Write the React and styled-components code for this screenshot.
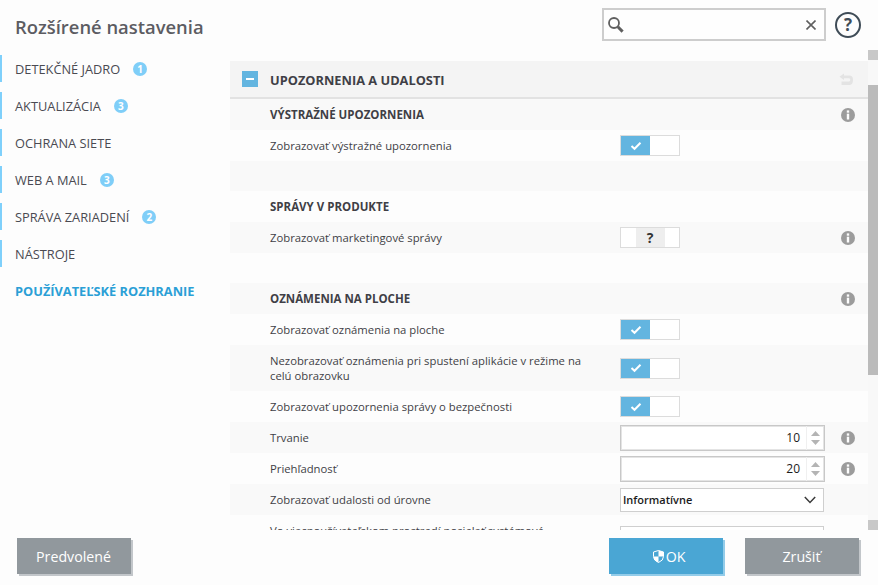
import styled, { createGlobalStyle } from 'styled-components';

const GlobalStyle = createGlobalStyle`
  html, body {
    margin: 0;
    padding: 0;
    background: #fdfdfd;
  }
  * {
    box-sizing: border-box;
  }
`;

const Page = styled.div`
  width: 878px;
  height: 585px;
  overflow: hidden;
  display: flex;
  flex-direction: column;
  background: #fdfdfd;
  font-family: "Open Sans", "Noto Sans", sans-serif;
  color: #3f3f46;
`;

const TopBar = styled.header`
  height: 50px;
  display: flex;
  align-items: flex-start;
  justify-content: space-between;
  padding: 8px 17px 0 15px;
`;

const Title = styled.h1`
  margin: 6px 0 0;
  font-size: 18.4px;
  line-height: 26px;
  font-weight: 600;
  color: #5c5c62;
`;

const TopTools = styled.div`
  display: flex;
  align-items: center;
  gap: 9px;
`;

const SearchBox = styled.div`
  width: 224px;
  height: 33px;
  border: 2px solid #cdcdcd;
  background: #fefefe;
  display: flex;
  align-items: center;
  justify-content: space-between;
  padding: 0 8px 0 3px;
`;

const HelpCircle = styled.div`
  width: 26px;
  height: 26px;
  border: 2px solid #3f4c57;
  border-radius: 50%;
  display: flex;
  align-items: center;
  justify-content: center;
  font-size: 17px;
  font-weight: 700;
  color: #3f4c57;
`;

const Main = styled.div`
  height: 480px;
  display: flex;
`;

const Sidebar = styled.nav`
  width: 230px;
  flex: none;
  padding-top: 5px;
  display: flex;
  flex-direction: column;
  gap: 10px;
`;

const NavItem = styled.div`
  height: 27px;
  display: flex;
  align-items: center;
  gap: 13px;
  padding-left: ${p => (p.$active ? '15px' : '13px')};
  border-left: ${p => (p.$active ? 'none' : '2px solid #7fd0fb')};
  font-size: 12.8px;
  font-weight: ${p => (p.$active ? 700 : 400)};
  color: ${p => (p.$active ? '#2b9fd6' : '#4a4a52')};
  white-space: nowrap;
`;

const Badge = styled.span`
  width: 14px;
  height: 14px;
  border-radius: 50%;
  background: #7fcef8;
  color: #fff;
  font-size: 10px;
  font-weight: 700;
  display: flex;
  align-items: center;
  justify-content: center;
`;

const Panel = styled.div`
  flex: 1;
  min-width: 0;
  padding-top: 11px;
  overflow: hidden;
`;

const PanelHead = styled.div`
  height: 38px;
  background: #f4f4f4;
  border-bottom: 2px solid #e2e2e2;
  display: flex;
  align-items: center;
  padding: 0 15px 0 12px;
`;

const Collapse = styled.div`
  width: 16px;
  height: 16px;
  background: #63b5e0;
  display: flex;
  align-items: center;
  justify-content: center;
  margin-right: 12px;

  &::after {
    content: '';
    width: 8px;
    height: 2px;
    background: #fff;
  }
`;

const PanelTitle = styled.div`
  flex: 1;
  padding-top: 2px;
  font-size: 12.8px;
  font-weight: 700;
  color: #3f3f46;
`;

const Row = styled.div`
  min-height: ${p => p.$height || 31}px;
  display: grid;
  grid-template-columns: 350px 205px 30px;
  align-items: center;
  padding-left: 40px;
  font-size: 11.3px;
  line-height: 15px;
  background: ${p => (p.$shade ? '#f9f9f9' : '#fdfdfd')};
`;

const SectionLabel = styled.div`
  font-weight: 700;
  font-size: 11.5px;
`;

const RowLabel = styled.div`
  padding-right: 38px;
`;

const InfoCell = styled.div`
  display: flex;
  justify-content: flex-end;
`;

const Toggle = styled.div`
  width: 60px;
  height: 21px;
  border: 1px solid #dcdcdc;
  background: #fff;
  display: grid;
  grid-template-columns: 1fr 1fr;
`;

const ToggleOn = styled.div`
  background: #63b5e0;
  display: flex;
  align-items: center;
  justify-content: center;
`;

const ToggleUnknown = styled.div`
  grid-column: 1 / 3;
  justify-self: center;
  width: 29px;
  background: #eeeeee;
  font-size: 14px;
  font-weight: 700;
  line-height: 19px;
  text-align: center;
  color: #333;
`;

const Spin = styled.div`
  width: 205px;
  height: 26px;
  border: 1px solid #c8c8c8;
  box-shadow: inset 0 0 0 1px #e4e4e4;
  background: #fff;
  display: flex;
  align-items: center;
`;

const SpinValue = styled.div`
  flex: 1;
  text-align: right;
  padding-right: 6px;
  font-size: 12px;
  color: #1c1c1c;
`;

const SpinArrows = styled.div`
  width: 17px;
  height: 100%;
  margin-right: 1px;
  border-left: 1px solid #f0f0f0;
  display: flex;
  flex-direction: column;
  align-items: center;
  justify-content: center;
  gap: 4px;
`;

const Select = styled.div`
  width: 204px;
  height: 24px;
  border: 1px solid #cfcfcf;
  background: #fff;
  display: flex;
  align-items: center;
  justify-content: space-between;
  padding: 0 7px 0 2px;
  font-size: 11px;
  font-weight: 600;
  color: #1c1c1c;
`;

const ScrollBar = styled.div`
  width: 10px;
  flex: none;
  display: flex;
  flex-direction: column;
  background: #f8f8f8;
`;

const ScrollStub = styled.div`
  height: 10px;
  background: #c8c8c8;
`;

const ScrollThumb = styled.div`
  height: 290px;
  margin-top: 25px;
  margin-bottom: auto;
  background: #bbbbbb;
`;

const Footer = styled.footer`
  flex: 1;
  display: flex;
  align-items: flex-start;
  padding: 8px 19px 0 17px;
`;

const Button = styled.button`
  width: 114px;
  height: 36px;
  border: none;
  padding: 0 ${p => (p.$primary ? 0 : 1)}px 0 ${p => (p.$primary ? 6 : 0)}px;
  background: ${p => (p.$primary ? '#4aa6d4' : '#91989d')};
  box-shadow: 2px 2px 0 ${p => (p.$primary ? '#93cce9' : '#c2c6ca')};
  color: #fff;
  font-family: inherit;
  font-size: 14.2px;
  display: flex;
  align-items: center;
  justify-content: center;
  gap: 2px;
  margin-left: ${p => p.$gap || 0}px;
`;

const InfoIcon = () => (
  <svg width="14" height="14" viewBox="0 0 14 14">
    <circle cx="7" cy="7" r="7" fill="#9c9c9c" />
    <rect x="5.8" y="2.4" width="2.4" height="2.3" fill="#fdfdfd" />
    <rect x="5.8" y="5.7" width="2.4" height="5.8" fill="#fdfdfd" />
  </svg>
);

const CheckIcon = () => (
  <svg width="12" height="10" viewBox="0 0 12 10">
    <path d="M1.5 5 L4.5 7.8 L10.5 1.8" fill="none" stroke="#fff" strokeWidth="2" />
  </svg>
);

const SearchIcon = () => (
  <svg width="18" height="18" viewBox="0 0 18 18">
    <circle cx="7" cy="7" r="5" fill="none" stroke="#5f5f5f" strokeWidth="1.8" />
    <path d="M10.8 10.8 L15.6 15.6" stroke="#5f5f5f" strokeWidth="3" />
  </svg>
);

const ClearIcon = () => (
  <svg width="10" height="10" viewBox="0 0 10 10">
    <path d="M0.5 0.5 L9.5 9.5 M9.5 0.5 L0.5 9.5" stroke="#5f5f5f" strokeWidth="1.6" />
  </svg>
);

const UndoIcon = () => (
  <svg width="14" height="13" viewBox="0 0 14 13">
    <path d="M5 0.5 L0.5 3.8 L5 7 L5 5.2 L10 5.2 Q11.3 5.2 11.3 6.8 Q11.3 8.6 10 8.6 L2.5 8.6 L2.5 12 L10.2 12 Q14 12 14 6.8 Q14 2.6 10.2 2.6 L5 2.6 Z" fill="#e3e3e3" />
  </svg>
);

const ShieldIcon = () => (
  <svg width="11" height="13" viewBox="0 0 11 13">
    <path d="M5.5 0.5 L10.5 2 L10.5 6.5 Q10.5 10.5 5.5 12.5 Q0.5 10.5 0.5 6.5 L0.5 2 Z" fill="none" stroke="#fff" />
    <path d="M5.5 0.5 L10.5 2 L10.5 6.5 L5.5 6.5 Z M5.5 6.5 L0.5 6.5 Q0.5 10.5 5.5 12.5 Z" fill="#fff" />
  </svg>
);

const ChevronIcon = () => (
  <svg width="12" height="8" viewBox="0 0 12 8">
    <path d="M0.8 1 L6 6.4 L11.2 1" fill="none" stroke="#3a3a3a" strokeWidth="1.5" />
  </svg>
);

const ArrowIcon = ({ down }) => (
  <svg width="9" height="5" viewBox="0 0 9 5">
    <path d={down ? 'M0 0 H9 L4.5 5 Z' : 'M0 5 H9 L4.5 0 Z'} fill="#b4b4b4" />
  </svg>
);

const navItems = [
  { label: 'DETEKČNÉ JADRO', badge: 1 },
  { label: 'AKTUALIZÁCIA', badge: 3 },
  { label: 'OCHRANA SIETE' },
  { label: 'WEB A MAIL', badge: 3 },
  { label: 'SPRÁVA ZARIADENÍ', badge: 2 },
  { label: 'NÁSTROJE' },
  { label: 'POUŽÍVATEĽSKÉ ROZHRANIE', active: true },
];

const rows = [
  { section: 'VÝSTRAŽNÉ UPOZORNENIA', info: true },
  { label: 'Zobrazovať výstražné upozornenia', control: 'on' },
  { height: 30 },
  { section: 'SPRÁVY V PRODUKTE' },
  { label: 'Zobrazovať marketingové správy', control: 'unknown', info: true },
  { height: 30 },
  { section: 'OZNÁMENIA NA PLOCHE', info: true },
  { label: 'Zobrazovať oznámenia na ploche', control: 'on' },
  { label: 'Nezobrazovať oznámenia pri spustení aplikácie v režime na celú obrazovku', control: 'on', height: 46 },
  { label: 'Zobrazovať upozornenia správy o bezpečnosti', control: 'on' },
  { label: 'Trvanie', control: 'spin', value: 10, info: true },
  { label: 'Priehľadnosť', control: 'spin', value: 20, info: true },
  { label: 'Zobrazovať udalosti od úrovne', control: 'select', value: 'Informatívne' },
  { label: 'Vo viacpoužívateľskom prostredí posielať systémové upozornenia používateľovi', control: 'select', value: '', height: 46 },
];

function Control({ row }) {
  if (row.control === 'on') {
    return (
      <Toggle>
        <ToggleOn><CheckIcon /></ToggleOn>
      </Toggle>
    );
  }
  if (row.control === 'unknown') {
    return (
      <Toggle>
        <ToggleUnknown>?</ToggleUnknown>
      </Toggle>
    );
  }
  if (row.control === 'spin') {
    return (
      <Spin>
        <SpinValue>{row.value}</SpinValue>
        <SpinArrows>
          <ArrowIcon />
          <ArrowIcon down />
        </SpinArrows>
      </Spin>
    );
  }
  if (row.control === 'select') {
    return (
      <Select>
        {row.value}
        <ChevronIcon />
      </Select>
    );
  }
  return <div />;
}

export default function App() {
  return (
    <Page>
      <GlobalStyle />
      <TopBar>
        <Title>Rozšírené nastavenia</Title>
        <TopTools>
          <SearchBox>
            <SearchIcon />
            <ClearIcon />
          </SearchBox>
          <HelpCircle>?</HelpCircle>
        </TopTools>
      </TopBar>
      <Main>
        <Sidebar>
          {navItems.map(item => (
            <NavItem key={item.label} $active={item.active}>
              {item.label}
              {item.badge && <Badge>{item.badge}</Badge>}
            </NavItem>
          ))}
        </Sidebar>
        <Panel>
          <PanelHead>
            <Collapse />
            <PanelTitle>UPOZORNENIA A UDALOSTI</PanelTitle>
            <UndoIcon />
          </PanelHead>
          {rows.map((row, i) => (
            <Row key={i} $shade={i % 2 === 0} $height={row.height}>
              {row.section ? <SectionLabel>{row.section}</SectionLabel> : <RowLabel>{row.label}</RowLabel>}
              <Control row={row} />
              <InfoCell>{row.info && <InfoIcon />}</InfoCell>
            </Row>
          ))}
        </Panel>
        <ScrollBar>
          <ScrollStub />
          <ScrollThumb />
          <ScrollStub />
        </ScrollBar>
      </Main>
      <Footer>
        <Button>Predvolené</Button>
        <Button $primary $gap={478}><ShieldIcon />OK</Button>
        <Button $gap={22}>Zrušiť</Button>
      </Footer>
    </Page>
  );
}
